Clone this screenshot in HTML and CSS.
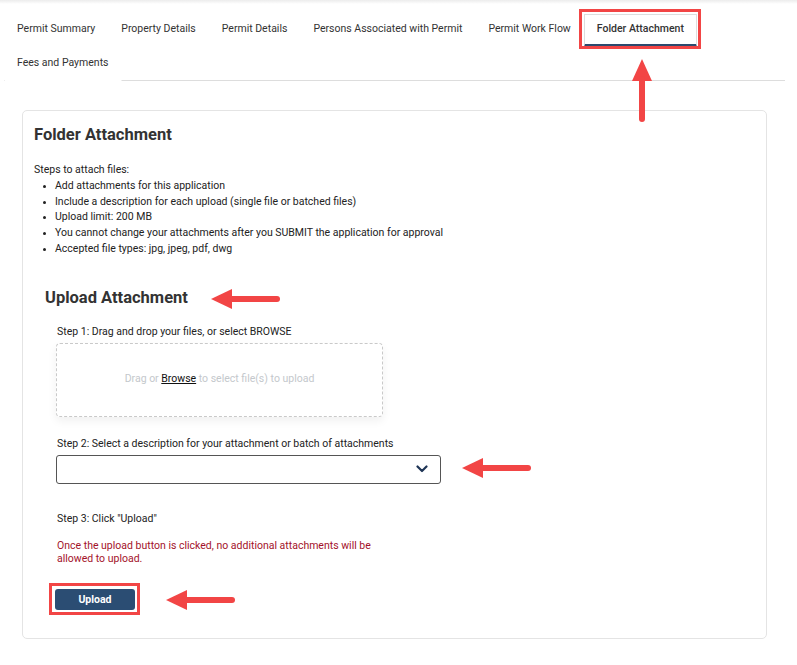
FILE: index.html
```html
<!DOCTYPE html>
<html lang="en">
<head>
  <meta charset="UTF-8">
  <meta name="viewport" content="width=device-width, initial-scale=1.0">
  <title>Folder Attachment</title>
  <link rel="stylesheet" href="styles.css">
</head>
<body>
  <div class="topbar"></div>

  <nav class="tabs">
    <a class="tab">Permit Summary</a>
    <a class="tab">Property Details</a>
    <a class="tab">Permit Details</a>
    <a class="tab">Persons Associated with Permit</a>
    <a class="tab">Permit Work Flow</a>
    <a class="tab active mark">Folder Attachment</a>
    <a class="tab">Fees and Payments</a>
  </nav>

  <div class="card">
    <h2 class="card-title">Folder Attachment</h2>

    <p class="intro">Steps to attach files:</p>
    <ul class="steps">
      <li>Add attachments for this application</li>
      <li>Include a description for each upload (single file or batched files)</li>
      <li>Upload limit: 200 MB</li>
      <li>You cannot change your attachments after you SUBMIT the application for approval</li>
      <li>Accepted file types: jpg, jpeg, pdf, dwg</li>
    </ul>

    <section class="upload">
      <h3 class="upload-title">Upload Attachment</h3>

      <div class="step">
        <label class="step-label">Step 1: Drag and drop your files, or select BROWSE</label>
        <div class="dropzone">
          <span>Drag or <a class="browse">Browse</a> to select file(s) to upload</span>
        </div>
      </div>

      <div class="step">
        <label class="step-label">Step 2: Select a description for your attachment or batch of attachments</label>
        <div class="select">
          <svg class="chevron" width="12" height="8" viewBox="0 0 12 8">
            <path d="M1.5 1.5 L6 6 L10.5 1.5" fill="none" stroke="#1f3556" stroke-width="2.2" stroke-linecap="round" stroke-linejoin="round"/>
          </svg>
        </div>
      </div>

      <div class="step step-last">
        <label class="step-label">Step 3: Click "Upload"</label>
        <p class="warning">Once the upload button is clicked, no additional attachments will be allowed to upload.</p>
        <button class="btn-upload mark">Upload</button>
      </div>
    </section>
  </div>

  <!-- annotation arrows -->
  <svg class="arrow arrow-up" width="22" height="64" viewBox="0 0 22 64">
    <polygon points="11,0 1,22 21,22" fill="#f24545"/>
    <line x1="11" y1="20" x2="11" y2="60" stroke="#f24545" stroke-width="6" stroke-linecap="round"/>
  </svg>
  <svg class="arrow arrow-title" width="70" height="22" viewBox="0 0 70 22">
    <polygon points="0,11 21,1 21,21" fill="#f24545"/>
    <line x1="19" y1="11" x2="66" y2="11" stroke="#f24545" stroke-width="6" stroke-linecap="round"/>
  </svg>
  <svg class="arrow arrow-select" width="70" height="22" viewBox="0 0 70 22">
    <polygon points="0,11 21,1 21,21" fill="#f24545"/>
    <line x1="19" y1="11" x2="66" y2="11" stroke="#f24545" stroke-width="6" stroke-linecap="round"/>
  </svg>
  <svg class="arrow arrow-button" width="70" height="22" viewBox="0 0 70 22">
    <polygon points="0,11 21,1 21,21" fill="#f24545"/>
    <line x1="19" y1="11" x2="66" y2="11" stroke="#f24545" stroke-width="6" stroke-linecap="round"/>
  </svg>
</body>
</html>
```

FILE: styles.css
```css
* {
  margin: 0;
  padding: 0;
  box-sizing: border-box;
}

body {
  font-family: Roboto, 'Liberation Sans', sans-serif;
  font-size: 10.5px;
  color: #222;
  background-color: #fff;
  position: relative;
  min-height: 665px;
}

.topbar {
  height: 4px;
  background: linear-gradient(#ececec, #fff);
}

/* tabs */
.tabs {
  display: flex;
  flex-wrap: wrap;
  margin: 10px 12px 0 4px;
  border-bottom: 1px solid #ddd;
}

.tab {
  position: relative;
  display: block;
  height: 33px;
  line-height: 28px;
  padding: 0 12px;
  font-size: 10.5px;
  color: #333;
  border: 1px solid transparent;
  border-bottom: 3px solid transparent;
  white-space: nowrap;
}

.tab:last-child {
  height: 34px;
  line-height: 30px;
  border-bottom: 1px solid #fff;
  margin-bottom: -1px;
}

.tab.active {
  border-color: #ddd;
  border-bottom: 3px solid #2c4a6e;
  font-weight: 500;
}

/* red highlight boxes */
.mark {
  position: relative;
}

.mark::after {
  content: "";
  position: absolute;
  top: -6px;
  left: -6px;
  right: -5px;
  bottom: -5px;
  border: 3px solid #f24545;
  pointer-events: none;
}

/* card */
.card {
  margin: 29px 30px 0 22px;
  border: 1px solid #e4e4e4;
  border-radius: 5px;
  padding: 14px 11px 28px 11px;
}

.card-title {
  font-size: 16.5px;
  font-weight: 700;
  color: #333;
  line-height: 20px;
  margin-bottom: 17px;
}

.intro {
  line-height: 15.8px;
}

.steps {
  list-style: disc;
  padding-left: 21px;
  line-height: 15.8px;
}

.steps li::marker {
  font-size: 9px;
}

/* upload section */
.upload {
  margin-top: 31px;
  padding-left: 11px;
}

.upload-title {
  font-size: 16.5px;
  font-weight: 700;
  color: #333;
  line-height: 20px;
  margin-bottom: 17px;
}

.step {
  padding-left: 12px;
  margin-bottom: 20px;
}

.step-label {
  display: block;
  line-height: 14px;
  margin-bottom: 4px;
}

.dropzone {
  width: 327px;
  height: 74px;
  margin-left: -1px;
  border: 1px dashed #c9c9c9;
  border-radius: 4px;
  box-shadow: 0 4px 10px rgba(0, 0, 0, 0.06);
  display: flex;
  align-items: center;
  justify-content: center;
  padding-bottom: 3px;
  color: #c4c8cc;
}

.browse {
  color: #111;
  text-decoration: underline;
}

.select {
  width: 385px;
  height: 29px;
  margin-left: -1px;
  border: 1px solid #555;
  border-radius: 3px;
  display: flex;
  align-items: center;
  justify-content: flex-end;
  padding-right: 12px;
}

.step-last {
  margin-top: 28px;
  margin-bottom: 0;
}

.warning {
  color: #a3122a;
  line-height: 13px;
  max-width: 327px;
  margin-top: 13px;
}

.btn-upload {
  display: block;
  margin-top: 24px;
  margin-left: -2px;
  width: 80px;
  height: 21px;
  border: none;
  border-radius: 3px;
  background-color: #2b4d73;
  color: #fff;
  font-family: Roboto, 'Liberation Sans', sans-serif;
  font-size: 10.5px;
  font-weight: 700;
}

/* annotation overlays */
.arrow {
  position: absolute;
}

.arrow-up {
  left: 631px;
  top: 59px;
}

.arrow-title {
  left: 211px;
  top: 288px;
}

.arrow-select {
  left: 462px;
  top: 457px;
}

.arrow-button {
  left: 166px;
  top: 589px;
}
```
